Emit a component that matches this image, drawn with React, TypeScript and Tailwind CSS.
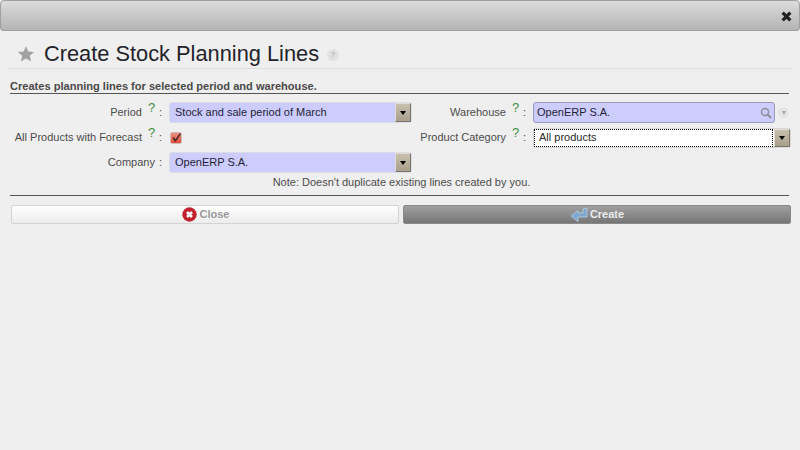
function Help() {
  return <span className="text-[13px] leading-none text-[#3f8f3f] relative top-[-5px] ml-[6px] w-[6px]">?</span>;
}

function Label({ text, help = true }: { text: string; help?: boolean }) {
  return (
    <div className="flex items-center justify-end text-[11px] text-[#4c4c4c] whitespace-nowrap pr-[7px]">
      <span>{text}</span>
      {help && <Help />}
      <span className={help ? "ml-[5px]" : "ml-[4px]"}>:</span>
    </div>
  );
}

function Arrow() {
  return (
    <div className="w-[16px] h-full shrink-0 bg-gradient-to-b from-[#c8c0ae] to-[#a89f8c] border-l border-t border-[#e0dcd2] border-r border-r-[#7c776c] border-b border-b-[#7c776c] flex items-center justify-center">
      <div className="w-0 h-0 border-l-[3px] border-r-[3px] border-t-[4px] border-l-transparent border-r-transparent border-t-black" />
    </div>
  );
}

function Select({ text }: { text: string }) {
  return (
    <div className="h-[21px] flex items-center bg-[#ccccff] rounded-[3px] text-[11px] text-[#1f1f33] pl-[5px] border border-[#dcdce8]">
      <span className="flex-1">{text}</span>
      <Arrow />
    </div>
  );
}

export default function App() {
  return (
    <div className="w-[800px] h-[450px] overflow-hidden bg-[#f0efef] flex flex-col font-['Liberation_Sans',Arial,sans-serif]">
      <div className="h-[31px] shrink-0 bg-gradient-to-b from-[#dcdcdc] to-[#b4b4b4] border border-[#a0a0a0] rounded-t-[4px] rounded-b-[3px] flex items-center justify-end pr-[7px] pt-[1px]">
        <svg width="11" height="11" viewBox="0 0 10 10">
          <path d="M1.5 1.5 L8.5 8.5 M8.5 1.5 L1.5 8.5" stroke="#222" strokeWidth="3" />
        </svg>
      </div>

      <div className="h-[38px] shrink-0 mx-[8px] border-b border-[#dedcdc] flex items-center pl-[9px] pt-[9px]">
        <svg width="18" height="18" viewBox="0 0 24 24" className="mr-[9px]">
          <path d="M12 1.5l3.2 7 7.6.8-5.7 5.1 1.6 7.5L12 18l-6.7 3.9 1.6-7.5L1.2 9.3l7.6-.8z" fill="#a3a1a1" />
        </svg>
        <h1 className="text-[21.8px] leading-none text-[#23232b] font-normal">Create Stock Planning Lines</h1>
        <div className="ml-[8px] mt-[2px] w-[12px] h-[12px] rounded-full bg-[#e2e0e0] flex items-center justify-center text-[7px] text-[#9a9a9a]">?</div>
      </div>

      <div className="mx-[10px] mt-[10px] h-[15px] border-b border-[#555] text-[11.07px] font-bold text-[#4a4a4a] leading-[14px] w-[779px]">
        Creates planning lines for selected period and warehouse.
      </div>

      <div className="grid grid-cols-[159px_243px_121px_242px_16px] ml-[10px] mt-[8px] gap-y-[4px] auto-rows-[21px] items-center">
        <Label text="Period" />
        <Select text="Stock and sale period of March" />
        <Label text="Warehouse" />
        <div className="h-[21px] flex items-center bg-[#ccccff] border border-[#9a9ab8] rounded-[3px] text-[11px] text-[#1f1f33] pl-[3px] pr-[2px]">
          <span className="flex-1">OpenERP S.A.</span>
          <svg width="12" height="12" viewBox="0 0 12 12">
            <circle cx="5" cy="5" r="3.5" fill="none" stroke="#8f8f9a" strokeWidth="1.4" />
            <path d="M7.5 7.5L11 11" stroke="#8f8f9a" strokeWidth="2" />
          </svg>
        </div>
        <div className="flex justify-center">
          <div className="w-[11px] h-[11px] rounded-full bg-[#e6e4e4] flex items-center justify-center ml-[1px]">
            <div className="w-0 h-0 border-l-[2.5px] border-r-[2.5px] border-t-[4px] border-l-transparent border-r-transparent border-t-[#a8a8a8]" />
          </div>
        </div>

        <Label text="All Products with Forecast" />
        <div className="pl-[1px]">
          <div className="w-[12px] h-[12px] rounded-[2px] bg-gradient-to-b from-[#ee9080] to-[#dc4c38] border border-[#d0bcb6] flex items-center justify-center">
            <svg width="11" height="11" viewBox="0 0 10 10" className="shrink-0">
              <path d="M2 5l2 3 4.5-6.5" fill="none" stroke="#3a2222" strokeWidth="1.3" />
            </svg>
          </div>
        </div>
        <Label text="Product Category" />
        <div className="col-span-2 w-[258px] h-[20px] flex items-center bg-white border border-[#d8d6d6] rounded-[2px] text-[11px] text-[#2a2a2a]">
          <div className="flex-1 self-stretch flex items-center border border-dotted border-black pl-[4px] mr-[1px]">All products</div>
          <Arrow />
        </div>

        <Label text="Company" help={false} />
        <Select text="OpenERP S.A." />
        <div className="col-span-3" />
      </div>

      <div className="ml-[10px] w-[779px] h-[15px] text-[11px] text-[#4c4c4c] text-center pl-[4px] leading-[14px] mt-[2px]">
        Note: Doesn't duplicate existing lines created by you.
      </div>

      <div className="ml-[10px] w-[779px] mt-[5px] border-t border-[#555]" />

      <div className="flex gap-[4px] ml-[11px] mt-[9px] w-[780px] h-[19px] text-[11px] font-bold">
        <div className="w-[388px] shrink-0 rounded-[2px] bg-gradient-to-b from-[#ffffff] to-[#ececec] border border-[#d4d2d2] flex items-center justify-center text-[#9a9a9a]">
          <svg width="15" height="15" viewBox="0 0 15 15" className="mr-[3px] ml-[1px]">
            <circle cx="7.5" cy="7.5" r="7.2" fill="#c0222c" />
            <path d="M5 5l5 5M10 5l-5 5" stroke="#fff" strokeWidth="2.6" />
          </svg>
          Close
        </div>
        <div className="flex-1 rounded-[2px] bg-gradient-to-b from-[#a0a0a0] to-[#767676] border border-[#8a8a8a] flex items-center justify-center text-[#eeeeee]">
          <svg width="18" height="16" viewBox="0 0 18 16" className="mr-[2px]">
            <path d="M17 1v9H8v4.5L1 9l7-5.5V6h5V2z" fill="#7fa8d0" stroke="#b8d0e6" strokeWidth="0.8" />
          </svg>
          Create
        </div>
      </div>
    </div>
  );
}
